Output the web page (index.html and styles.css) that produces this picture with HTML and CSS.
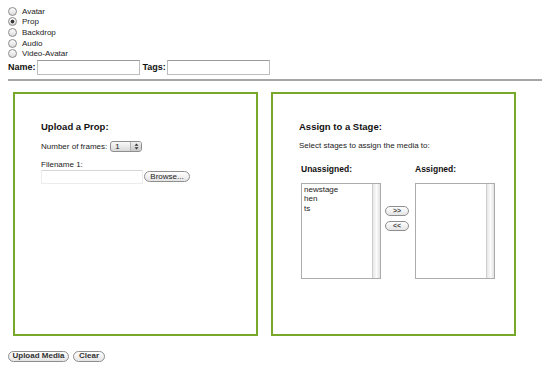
FILE: index.html
```html
<!DOCTYPE html>
<html lang="en">
<head>
    <meta charset="UTF-8">
    <title>Upload Media</title>
    <link rel="stylesheet" href="styles.css">
</head>
<body>
    <form class="media-form">
        <div class="types">
            <label class="type"><input type="radio" name="type" value="avatar"> Avatar</label>
            <label class="type"><input type="radio" name="type" value="prop" checked> Prop</label>
            <label class="type"><input type="radio" name="type" value="backdrop"> Backdrop</label>
            <label class="type"><input type="radio" name="type" value="audio"> Audio</label>
            <label class="type"><input type="radio" name="type" value="video"> Video-Avatar</label>
        </div>

        <div class="meta">
            <label for="name" class="meta-label">Name:</label>
            <input type="text" id="name" class="text-input">
            <label for="tags" class="meta-label tags-label">Tags:</label>
            <input type="text" id="tags" class="text-input">
        </div>

        <hr class="divider">

        <div class="panels">
            <div class="panel">
                <h2>Upload a Prop:</h2>
                <div class="frames">
                    <span>Number of frames:</span>
                    <div class="select-box">
                        <span class="select-value">1</span>
                        <span class="select-arrows">
                            <svg width="5" height="7" viewBox="0 0 5 7"><path d="M2.5 0.5 L4.5 2.8 L0.5 2.8 Z M2.5 6.5 L4.5 4.2 L0.5 4.2 Z" fill="#333"/></svg>
                        </span>
                    </div>
                </div>
                <div class="file-label">Filename 1:</div>
                <div class="file-row">
                    <div class="file-box"></div>
                    <button type="button" class="btn browse">Browse...</button>
                </div>
            </div>

            <div class="panel">
                <h2>Assign to a Stage:</h2>
                <p class="hint">Select stages to assign the media to:</p>
                <div class="stage-lists">
                    <div class="list-col">
                        <div class="list-label">Unassigned:</div>
                        <div class="listbox">
                            <div class="list-items">
                                <div>newstage</div>
                                <div>hen</div>
                                <div>ts</div>
                            </div>
                            <div class="list-track"></div>
                        </div>
                    </div>
                    <div class="move-btns">
                        <button type="button" class="btn move">&gt;&gt;</button>
                        <button type="button" class="btn move">&lt;&lt;</button>
                    </div>
                    <div class="list-col">
                        <div class="list-label">Assigned:</div>
                        <div class="listbox">
                            <div class="list-items"></div>
                            <div class="list-track"></div>
                        </div>
                    </div>
                </div>
            </div>
        </div>

        <div class="actions">
            <button type="button" class="btn action upload">Upload Media</button>
            <button type="button" class="btn action clear">Clear</button>
        </div>
    </form>
</body>
</html>
```

FILE: styles.css
```css
body {
    margin: 6px 8px 8px;
    font-family: "Liberation Sans", Arial, sans-serif;
    font-size: 8px;
    color: #222;
    background: #fff;
}
.type {
    display: flex;
    align-items: center;
    gap: 5px;
    height: 10.6px;
}
.type input {
    appearance: none;
    margin: 0;
    width: 9px;
    height: 9px;
    border: 1px solid #8c8c8c;
    border-radius: 50%;
    background: linear-gradient(#fdfdfd, #dcdcdc);
    box-sizing: border-box;
}
.type input:checked {
    background: radial-gradient(circle, #3a3a3a 0, #3a3a3a 1.6px, transparent 2.2px), linear-gradient(#fdfdfd, #d2d2d2);
}
.meta {
    display: flex;
    align-items: center;
    gap: 1px;
    height: 15px;
    margin-top: 1px;
}
.meta-label {
    font-weight: bold;
    font-size: 9px;
    color: #111;
}
.tags-label {
    margin-left: 2px;
}
.text-input {
    width: 103px;
    height: 15px;
    padding: 0;
    margin: 0;
    box-sizing: border-box;
    border: 1px solid #bdbdbd;
    border-top-color: #9a9a9a;
}
.divider {
    margin: 4px 0 0;
    border: none;
    height: 2px;
    background: #a6a6a6;
}
.panels {
    display: flex;
    gap: 13px;
    margin: 11px 0 0 5px;
}
.panel {
    width: 245px;
    height: 244px;
    box-sizing: border-box;
    border: 2px solid #78a82a;
    padding: 27px 0 0 26px;
}
.panel h2 {
    margin: 0;
    font-size: 9.5px;
    line-height: 11px;
    color: #111;
}
.frames {
    display: flex;
    align-items: center;
    gap: 3px;
    height: 11px;
    margin-top: 9px;
}
.select-box {
    display: flex;
    width: 32px;
    height: 11px;
    box-sizing: border-box;
    border: 1px solid #8f8f8f;
    border-radius: 3px;
    background: linear-gradient(#fafafa, #d9d9d9);
}
.select-value {
    flex: 1;
    padding-left: 4px;
    line-height: 9px;
}
.select-arrows {
    display: flex;
    align-items: center;
    justify-content: center;
    width: 10px;
    border-left: 1px solid #b0b0b0;
    background: linear-gradient(#f0f0f0, #c8c8c8);
    border-radius: 0 2px 2px 0;
}
.file-label {
    margin-top: 8px;
    line-height: 10px;
}
.file-row {
    display: flex;
    align-items: center;
}
.file-box {
    width: 102px;
    height: 14px;
    box-sizing: border-box;
    border: 1px solid #ececec;
    border-top-color: #d6d6d6;
}
.btn {
    margin: 0;
    padding: 0;
    height: 11px;
    box-sizing: border-box;
    border: 1px solid #8e8e8e;
    border-radius: 6px;
    background: linear-gradient(#ffffff, #e4e4e4);
    font-family: inherit;
    font-size: 8px;
    line-height: 8px;
    color: #222;
}
.browse {
    width: 46px;
    margin-left: 1px;
}
.hint {
    margin: 9px 0 0;
    line-height: 10px;
}
.stage-lists {
    display: flex;
    align-items: flex-end;
    margin-top: 13px;
    padding-left: 2px;
}
.list-label {
    font-weight: bold;
    font-size: 8.5px;
    line-height: 10px;
    margin-bottom: 9px;
    color: #111;
}
.listbox {
    display: flex;
    width: 80px;
    height: 96px;
    box-sizing: border-box;
    border: 1px solid #acacac;
}
.list-items {
    flex: 1;
    padding: 1px 0 0 2px;
    line-height: 9.3px;
}
.list-track {
    width: 7px;
    border-left: 1px solid #cfcfcf;
    background: linear-gradient(to right, #e6e6e6, #fbfbfb 50%, #e2e2e2);
}
.move-btns {
    display: flex;
    flex-direction: column;
    gap: 5px;
    height: 96px;
    box-sizing: border-box;
    padding-top: 23px;
    margin: 0 6px 0 4px;
}
.move {
    width: 24px;
    height: 10px;
    font-size: 7px;
    font-weight: bold;
    color: #444;
}
.actions {
    display: flex;
    gap: 4px;
    margin-top: 15px;
}
.action {
    height: 11px;
    font-weight: bold;
    color: #333;
}
.upload {
    width: 61px;
}
.clear {
    width: 32px;
}
```
